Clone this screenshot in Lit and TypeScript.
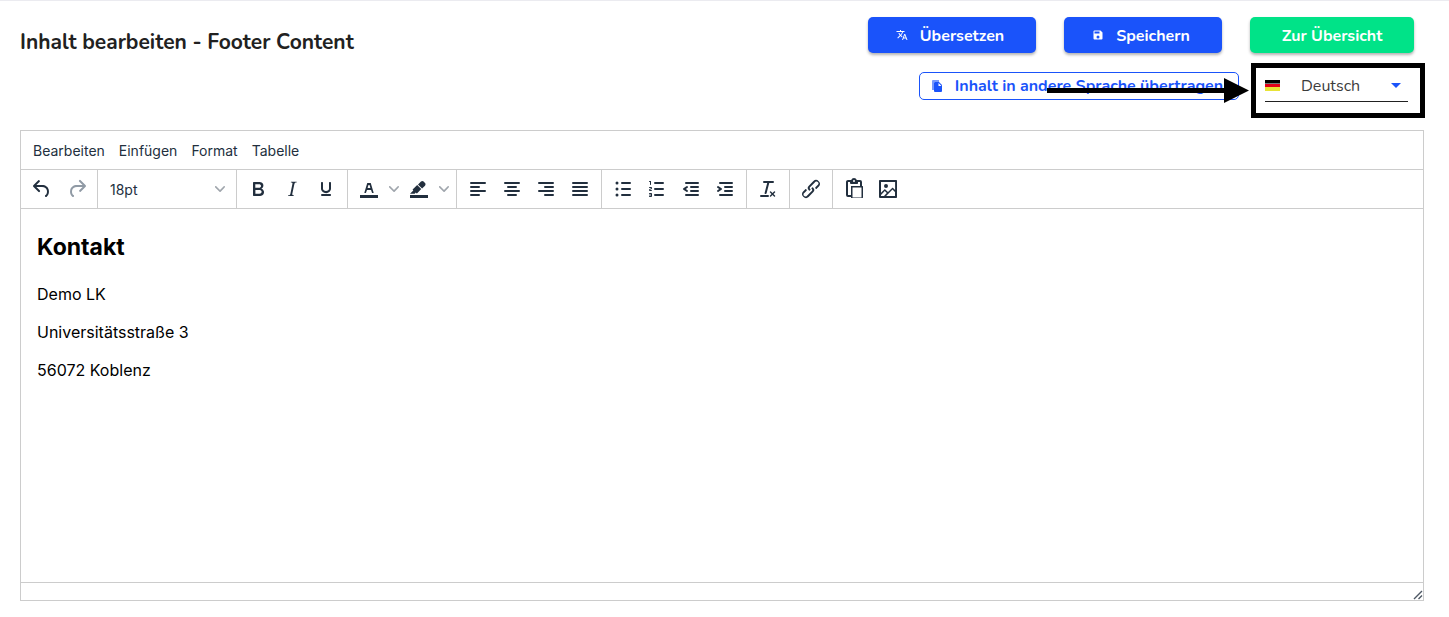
import { LitElement, html, css, svg, type TemplateResult } from "lit";
import { customElement, property, state } from "lit/decorators.js";

const ICONS: Record<string, string[]> = {
  undo: ["M6.4 8H12c3.7 0 6.2 2 6.8 5.1.6 2.7-.4 5.6-2.3 6.8a1 1 0 0 1-1-1.8c1.1-.6 1.8-2.7 1.4-4.6-.5-2.1-2.1-3.5-4.9-3.5H6.4l3.3 3.3a1 1 0 1 1-1.4 1.4l-5-5a1 1 0 0 1 0-1.4l5-5a1 1 0 0 1 1.4 1.4L6.4 8Z"],
  redo: ["M17.6 10H12c-2.8 0-4.4 1.4-4.9 3.5-.4 2 .3 4 1.4 4.6a1 1 0 1 1-1 1.8c-2-1.2-2.9-4.1-2.3-6.8.6-3 3-5.1 6.8-5.1h5.6l-3.3-3.3a1 1 0 1 1 1.4-1.4l5 5a1 1 0 0 1 0 1.4l-5 5a1 1 0 0 1-1.4-1.4l3.3-3.3Z"],
  bold: ["M7.8 19c-.3 0-.5 0-.6-.2l-.2-.5V5.7c0-.2 0-.4.2-.5l.6-.2h5c1.5 0 2.7.3 3.5 1 .7.6 1.1 1.4 1.1 2.5a3 3 0 0 1-.6 1.9c-.4.6-1 1-1.6 1.2.4.1.9.3 1.3.6s.8.7 1 1.2c.4.4.5 1 .5 1.6 0 1.3-.4 2.3-1.3 3-.8.7-2.1 1-3.8 1H7.8Zm5-8.3c.6 0 1.2-.1 1.6-.5.4-.3.6-.7.6-1.3 0-1.1-.8-1.7-2.3-1.7H9.3v3.5h3.4Zm.5 6c.7 0 1.3-.1 1.7-.4.4-.4.6-.9.6-1.5s-.2-1-.7-1.4c-.4-.3-1-.4-2-.4H9.4v3.8h4Z"],
  italic: ["m16.7 4.7-.1.9h-.3c-.6 0-1 0-1.4.3-.3.3-.4.6-.5 1.1l-2.1 9.8v.6c0 .5.4.8 1.4.8h.2l-.2.8H8l.2-.8h.2c1.1 0 1.8-.5 2-1.5l2-9.8.1-.5c0-.6-.4-.8-1.4-.8h-.3l.2-.9h5.8Z"],
  underline: ["M16 5c.6 0 1 .4 1 1v5.5a4 4 0 0 1-.4 1.8l-1 1.4a5.3 5.3 0 0 1-5.5 1 5 5 0 0 1-1.6-1c-.5-.4-.8-.9-1.1-1.4a4 4 0 0 1-.4-1.8V6c0-.6.4-1 1-1s1 .4 1 1v5.5c0 .3 0 .6.2 1l.6.7a3.3 3.3 0 0 0 2.2.8 3.4 3.4 0 0 0 2.2-.8c.3-.2.4-.5.6-.8l.2-.9V6c0-.6.4-1 1-1ZM8 17h8c.6 0 1 .4 1 1s-.4 1-1 1H8a1 1 0 0 1 0-2Z"],
  textColor: ["M3 18h18v3H3z", "M8.7 16h-.8a.5.5 0 0 1-.5-.6l2.7-9c.1-.3.3-.4.5-.4h2.8c.2 0 .4.1.5.4l2.7 9a.5.5 0 0 1-.5.6h-.8a.5.5 0 0 1-.4-.4l-.7-2.2c0-.3-.3-.4-.5-.4h-3.4c-.2 0-.4.1-.5.4l-.7 2.2c0 .3-.2.4-.4.4Zm2.6-7.6-.6 2a.5.5 0 0 0 .5.6h1.6a.5.5 0 0 0 .5-.6l-.6-2c0-.3-.3-.4-.5-.4h-.4c-.2 0-.4.1-.5.4Z"],
  highlight: ["M3 18h18v3H3z", "M7.7 16.7H3l3.3-3.3-.7-.8L10.2 8l4 4.1-4 4.2c-.2.2-.6.2-.8 0l-.6-.7-1.1 1.1Zm5-7.5L11 7.4l3-2.9a2 2 0 0 1 2.6 0L18 6c.7.7.7 2 0 2.7l-2.9 2.9-1.8-1.8-.6-.6Z"],
  alignLeft: ["M5 5h14a1 1 0 0 1 0 2H5a1 1 0 1 1 0-2Zm0 4h8a1 1 0 0 1 0 2H5a1 1 0 1 1 0-2Zm0 8h8a1 1 0 0 1 0 2H5a1 1 0 0 1 0-2Zm0-4h14a1 1 0 0 1 0 2H5a1 1 0 0 1 0-2Z"],
  alignCenter: ["M5 5h14a1 1 0 0 1 0 2H5a1 1 0 1 1 0-2Zm3 4h8a1 1 0 0 1 0 2H8a1 1 0 1 1 0-2Zm0 8h8a1 1 0 0 1 0 2H8a1 1 0 0 1 0-2Zm-3-4h14a1 1 0 0 1 0 2H5a1 1 0 0 1 0-2Z"],
  alignRight: ["M5 5h14a1 1 0 0 1 0 2H5a1 1 0 1 1 0-2Zm6 4h8a1 1 0 0 1 0 2h-8a1 1 0 0 1 0-2Zm0 8h8a1 1 0 0 1 0 2h-8a1 1 0 0 1 0-2Zm-6-4h14a1 1 0 0 1 0 2H5a1 1 0 0 1 0-2Z"],
  alignJustify: ["M5 5h14a1 1 0 0 1 0 2H5a1 1 0 1 1 0-2Zm0 4h14a1 1 0 0 1 0 2H5a1 1 0 1 1 0-2Zm0 4h14a1 1 0 0 1 0 2H5a1 1 0 0 1 0-2Zm0 4h14a1 1 0 0 1 0 2H5a1 1 0 0 1 0-2Z"],
  bulletList: ["M11 5h8a1 1 0 0 1 0 2h-8a1 1 0 0 1 0-2Zm0 6h8a1 1 0 0 1 0 2h-8a1 1 0 0 1 0-2Zm0 6h8a1 1 0 0 1 0 2h-8a1 1 0 0 1 0-2ZM4.5 6a1.5 1.5 0 1 1 3 0 1.5 1.5 0 0 1-3 0Zm0 6a1.5 1.5 0 1 1 3 0 1.5 1.5 0 0 1-3 0Zm0 6a1.5 1.5 0 1 1 3 0 1.5 1.5 0 0 1-3 0Z"],
  numberList: ["M10 17h8a1 1 0 0 1 0 2h-8a1 1 0 0 1 0-2Zm0-6h8a1 1 0 0 1 0 2h-8a1 1 0 0 1 0-2Zm0-6h8a1 1 0 0 1 0 2h-8a1 1 0 1 1 0-2ZM6 4v3.5c0 .3-.2.5-.5.5a.5.5 0 0 1-.5-.5V5h-.5a.5.5 0 0 1 0-1H6Zm-1 8.8.2.2h1.3c.3 0 .5.2.5.5s-.2.5-.5.5H4.9a1 1 0 0 1-.9-1V13c0-.4.3-.8.6-1l1.2-.4.2-.3a.2.2 0 0 0-.2-.2H4.5a.5.5 0 0 1-.5-.5c0-.3.2-.5.5-.5h1.6c.5 0 .9.4.9 1v.1c0 .4-.3.8-.6 1l-1.2.4-.2.3ZM7 17v2c0 .6-.4 1-1 1H4.5a.5.5 0 0 1 0-1h1.2c.2 0 .3-.1.3-.3 0-.2-.1-.3-.3-.3H4.4a.4.4 0 1 1 0-.8h1.3c.2 0 .3-.1.3-.3 0-.2-.1-.3-.3-.3H4.5a.5.5 0 1 1 0-1H6c.6 0 1 .4 1 1Z"],
  outdent: ["M7 5h12a1 1 0 0 1 0 2H7a1 1 0 1 1 0-2Zm5 4h7a1 1 0 0 1 0 2h-7a1 1 0 0 1 0-2Zm0 4h7a1 1 0 0 1 0 2h-7a1 1 0 0 1 0-2Zm-5 4h12a1 1 0 0 1 0 2H7a1 1 0 0 1 0-2Zm1.6-3.8a1 1 0 0 1-1.2 1.6l-3-2a1 1 0 0 1 0-1.6l3-2a1 1 0 0 1 1.2 1.6L6.8 12l1.8 1.2Z"],
  indent: ["M7 5h12a1 1 0 0 1 0 2H7a1 1 0 1 1 0-2Zm5 4h7a1 1 0 0 1 0 2h-7a1 1 0 0 1 0-2Zm0 4h7a1 1 0 0 1 0 2h-7a1 1 0 0 1 0-2Zm-5 4h12a1 1 0 0 1 0 2H7a1 1 0 0 1 0-2Zm-2.6-3.8L6.2 12l-1.8-1.2a1 1 0 0 1 1.2-1.6l3 2a1 1 0 0 1 0 1.6l-3 2a1 1 0 1 1-1.2-1.6Z"],
  removeFormat: ["M13.2 6a1 1 0 0 1 0 .2l-2.6 10a1 1 0 0 1-1 .8h-.2a.8.8 0 0 1-.8-1l2.6-10H8a1 1 0 1 1 0-2h9a1 1 0 0 1 0 2h-3.8ZM5 18h7a1 1 0 0 1 0 2H5a1 1 0 0 1 0-2Zm13 1.5L16.5 18 15 19.5a.7.7 0 0 1-1-1l1.5-1.5-1.5-1.5a.7.7 0 0 1 1-1l1.5 1.5 1.5-1.5a.7.7 0 0 1 1 1L17.5 17l1.5 1.5a.7.7 0 0 1-1 1Z"],
  link: ["M6.2 12.3a1 1 0 0 1 1.4 1.4l-2 2a2 2 0 1 0 2.6 2.8l4.8-4.8a1 1 0 0 0 0-1.4 1 1 0 1 1 1.4-1.3 2.9 2.9 0 0 1 0 4L9.6 20a3.9 3.9 0 0 1-5.5-5.5l2-2Zm11.6-.6a1 1 0 0 1-1.4-1.4l2-2a2 2 0 1 0-2.6-2.8L11 10.3a1 1 0 0 0 0 1.4A1 1 0 1 1 9.6 13a2.9 2.9 0 0 1 0-4L14.4 4a3.9 3.9 0 0 1 5.5 5.5l-2 2Z"],
  paste: ["M18 9V5h-2v1c0 .6-.4 1-1 1H9a1 1 0 0 1-1-1V5H6v13h3V9h9ZM9 20H6a2 2 0 0 1-2-2V5c0-1.1.9-2 2-2h3.2A3 3 0 0 1 12 1a3 3 0 0 1 2.8 2H18a2 2 0 0 1 2 2v4h.5c.3 0 .5.2.5.5v11c0 .3-.2.5-.5.5h-11a.5.5 0 0 1-.5-.5V20Zm1.500-9.500v10h9v-10h-9ZM12 3a1 1 0 1 0 0 2 1 1 0 0 0 0-2Z"],
  image: ["m5 15.7 3.3-3.2c.3-.3.7-.3 1 0L12 15l4.1-4c.3-.4.8-.4 1 0l2 1.9V5H5v10.7ZM5 18V19h3l2.8-2.9-2-2L5 17.9Zm14-3-2.5-2.4-6.4 6.5H19v-4ZM4 3h16c.6 0 1 .4 1 1v16c0 .6-.4 1-1 1H4a1 1 0 0 1-1-1V4c0-.6.4-1 1-1Zm6 8a2 2 0 1 1 0-4 2 2 0 0 1 0 4Z"],
  translate: ["m12.87 15.07-2.54-2.51.03-.03A17.52 17.52 0 0 0 14.07 6H17V4h-7V2H8v2H1v1.99h11.17C11.5 7.92 10.44 9.75 9 11.35 8.07 10.32 7.3 9.19 6.69 8h-2c.73 1.63 1.73 3.17 2.98 4.56l-5.09 5.02L4 19l5-5 3.11 3.11.76-2.04ZM18.5 10h-2L12 22h2l1.12-3h4.75L21 22h2l-4.5-12Zm-2.62 7 1.62-4.33L19.12 17h-3.24Z"],
  save: ["M17 3H5a2 2 0 0 0-2 2v14a2 2 0 0 0 2 2h14a2 2 0 0 0 2-2V7l-4-4Zm-5 16a3 3 0 1 1 0-6 3 3 0 0 1 0 6Zm3-10H5V5h10v4Z"],
};

@customElement("line-icon")
export class LineIcon extends LitElement {
  @property() name = "";
  @property({ type: Number }) size = 24;

  static styles = css`
    :host {
      display: flex;
      flex: none;
    }
    svg {
      display: block;
      fill: currentColor;
    }
  `;

  render() {
    return html`<svg width=${this.size} height=${this.size} viewBox="0 0 24 24" aria-hidden="true">
      ${(ICONS[this.name] ?? []).map((d) => svg`<path fill-rule="evenodd" d=${d}></path>`)}
    </svg>`;
  }
}

type Tool = { icon: string; label: string; menu?: boolean };

const STYLE_TOOLS: Tool[][] = [
  [
    { icon: "bold", label: "Fett" },
    { icon: "italic", label: "Kursiv" },
    { icon: "underline", label: "Unterstrichen" },
  ],
  [
    { icon: "textColor", label: "Textfarbe", menu: true },
    { icon: "highlight", label: "Hintergrundfarbe", menu: true },
  ],
  [
    { icon: "alignLeft", label: "Linksbündig" },
    { icon: "alignCenter", label: "Zentriert" },
    { icon: "alignRight", label: "Rechtsbündig" },
    { icon: "alignJustify", label: "Blocksatz" },
  ],
  [
    { icon: "bulletList", label: "Aufzählung" },
    { icon: "numberList", label: "Nummerierte Liste" },
    { icon: "outdent", label: "Einzug verkleinern" },
    { icon: "indent", label: "Einzug vergrößern" },
  ],
  [{ icon: "removeFormat", label: "Formatierung entfernen" }],
  [{ icon: "link", label: "Link" }],
  [
    { icon: "paste", label: "Einfügen" },
    { icon: "image", label: "Bild" },
  ],
];

const chevron = html`<svg class="chevron" width="10" height="10" viewBox="0 0 10 10" aria-hidden="true">
  <path d="M8.7 2.2c.3-.3.8-.3 1 0 .4.4.4.9 0 1.2L5.7 7.8c-.3.3-.9.3-1.2 0L.2 3.4a.8.8 0 0 1 0-1.2c.3-.3.8-.3 1.1 0L5 6l3.7-3.8Z" />
</svg>`;

@customElement("text-editor")
export class TextEditor extends LitElement {
  static styles = css`
    :host {
      display: flex;
      flex-direction: column;
      box-sizing: border-box;
      border: 1px solid #cccccc;
      background: #fff;
      color: #222f3e;
      font-family: Inter, "Liberation Sans", sans-serif;
      font-size: 14px;
    }
    button,
    select {
      margin: 0;
      padding: 0;
      border: 0;
      background: none;
      color: inherit;
      font: inherit;
      cursor: pointer;
    }
    .menubar {
      display: flex;
      height: 39px;
      align-items: center;
      padding: 0 5px;
      box-sizing: border-box;
      border-bottom: 1px solid #cccccc;
    }
    .menu {
      padding: 0 7px;
      height: 28px;
    }
    .toolbar {
      display: flex;
      height: 38px;
      border-bottom: 1px solid #cccccc;
    }
    .group {
      display: flex;
      align-items: center;
      padding: 0 4px;
      border-right: 1px solid #cccccc;
    }
    .group:last-child {
      border-right: 0;
    }
    .history {
      padding: 0 3px;
    }
    .tool {
      display: flex;
      justify-content: center;
      align-items: center;
      width: 34px;
      height: 28px;
    }
    .history .tool {
      width: 35px;
    }
    .tool:disabled {
      color: #909aa5;
    }
    .more {
      display: flex;
      justify-content: center;
      align-items: center;
      width: 16px;
      height: 28px;
    }
    .chevron {
      display: block;
      fill: #a0a6ad;
    }
    .size {
      display: grid;
      width: 130px;
      align-items: center;
    }
    .size > * {
      grid-area: 1 / 1;
    }
    .size select {
      appearance: none;
      height: 28px;
      padding: 0 8px;
    }
    .size .chevron {
      justify-self: end;
      margin-right: 7px;
      pointer-events: none;
    }
    .content {
      flex: 1;
      padding: 16px;
      color: #000;
      font-size: 16px;
      line-height: 22px;
      outline: none;
    }
    .content h2 {
      margin: 6px 0 20px;
      font-size: 23px;
      line-height: 32px;
      font-weight: 700;
    }
    .content p {
      margin: 0 0 16px;
    }
    .status {
      display: flex;
      justify-content: flex-end;
      align-items: flex-end;
      height: 17px;
      border-top: 1px solid #cccccc;
    }
    .grip {
      display: block;
      fill: none;
      stroke: #4e5864;
    }
  `;

  private tool(t: Tool): TemplateResult {
    return html`<button class="tool" type="button" aria-label=${t.label}><line-icon name=${t.icon}></line-icon></button>
      ${t.menu
        ? html`<button class="more" type="button" aria-label="${t.label} auswählen">${chevron}</button>`
        : null}`;
  }

  render() {
    return html`
      <div class="menubar">
        ${["Bearbeiten", "Einfügen", "Format", "Tabelle"].map(
          (m) => html`<button class="menu" type="button">${m}</button>`
        )}
      </div>
      <div class="toolbar">
        <div class="group history">
          <button class="tool" type="button" aria-label="Rückgängig"><line-icon name="undo"></line-icon></button>
          <button class="tool" type="button" aria-label="Wiederholen" disabled><line-icon name="redo"></line-icon></button>
        </div>
        <div class="group">
          <div class="size">
            <select aria-label="Schriftgröße">
              <option>18pt</option>
            </select>
            ${chevron}
          </div>
        </div>
        ${STYLE_TOOLS.map((g) => html`<div class="group">${g.map((t) => this.tool(t))}</div>`)}
      </div>
      <div class="content" contenteditable="true" role="textbox" aria-label="Inhalt">
        <h2>Kontakt</h2>
        <p>Demo LK</p>
        <p>Universitätsstraße 3</p>
        <p>56072 Koblenz</p>
      </div>
      <div class="status">
        <svg class="grip" width="12" height="12" viewBox="0 0 12 12" aria-hidden="true">
          <path d="M3 11 11 3M7.500 11l3.500-3.500" stroke-width="1.4" />
        </svg>
      </div>
    `;
  }
}

@customElement("app-root")
export class AppRoot extends LitElement {
  @state() private language = "Deutsch";

  static styles = css`
    :host {
      display: flex;
      flex-direction: column;
      box-sizing: border-box;
      min-height: 100vh;
      padding: 16px 25px 16px 20px;
      border-top: 1px solid #ebebf0;
      background: #fff;
      color: #212121;
      font-family: Nunito, Lato, "Open Sans", sans-serif;
      font-size: 16px;
    }
    .header {
      display: flex;
      justify-content: space-between;
      align-items: flex-start;
      margin-bottom: 12px;
    }
    h1 {
      margin: 11px 0 0;
      font-size: 21px;
      line-height: 28px;
      font-weight: 700;
    }
    .controls {
      display: flex;
      flex-direction: column;
      align-items: flex-end;
      gap: 10px;
    }
    .actions {
      display: flex;
      gap: 28px;
      margin-right: 10px;
    }
    button {
      display: flex;
      align-items: center;
      justify-content: center;
      box-sizing: border-box;
      font: inherit;
      font-weight: 700;
      cursor: pointer;
    }
    .action {
      gap: 12px;
      min-width: 158px;
      height: 36px;
      padding: 0 28px 0 24px;
      border: 0;
      border-radius: 5px;
      background: #1a53fa;
      color: #fff;
      box-shadow: 0 2px 3px rgba(0, 0, 0, 0.3);
    }
    .action span {
      padding-top: 2px;
    }
    .wide {
      min-width: 168px;
    }
    .overview {
      min-width: 164px;
      padding: 0 24px;
      background: #00e388;
    }
    .transfer-row {
      display: flex;
      align-items: flex-start;
      gap: 12px;
      margin-right: -1px;
    }
    .transfer {
      gap: 12px;
      min-width: 320px;
      height: 28px;
      margin-top: 9px;
      padding: 0 12px 0 8px;
      border: 1px solid #1a53fa;
      border-radius: 5px;
      background: #fff;
      color: #1a53fa;
    }
    .callout {
      position: relative;
      box-sizing: border-box;
      width: 174px;
      height: 55px;
      padding: 0 12px 0 9px;
      border: 5px solid #000;
    }
    .arrow {
      position: absolute;
      right: calc(100% + 7px);
      top: 10px;
      display: block;
    }
    .language {
      display: grid;
      grid-template-columns: 15px 1fr;
      align-items: center;
      height: 33px;
      border-bottom: 1px solid #212121;
    }
    .language > * {
      grid-row: 1;
    }
    .language svg {
      display: block;
      pointer-events: none;
    }
    .flag {
      grid-column: 1;
    }
    select {
      grid-column: 1 / 3;
      width: 100%;
      height: 32px;
      margin: 2px 0 0;
      padding: 0 24px 0 36px;
      appearance: none;
      border: 0;
      background: none;
      color: #3c3c3c;
      font: inherit;
    }
    .caret {
      grid-column: 2;
      justify-self: end;
      margin-right: 7px;
    }
    text-editor {
      flex: 1;
    }
  `;

  render() {
    return html`
      <div class="header">
        <h1>Inhalt bearbeiten - Footer Content</h1>
        <div class="controls">
          <div class="actions">
            <button class="action wide" type="button">
              <line-icon name="translate" size="12"></line-icon><span>Übersetzen</span>
            </button>
            <button class="action" type="button">
              <line-icon name="save" size="12"></line-icon><span>Speichern</span>
            </button>
            <button class="action overview" type="button"><span>Zur Übersicht</span></button>
          </div>
          <div class="transfer-row">
            <button class="transfer" type="button">
              <svg width="12" height="12" viewBox="0 0 12 12" aria-hidden="true">
                <path d="M1 10V1a1 1 0 0 1 1-1h6v2H3v8Z" fill="#1a53fa" opacity=".6" />
                <path d="M4 2h4l3 3v6a1 1 0 0 1-1 1H4a1 1 0 0 1-1-1V3a1 1 0 0 1 1-1Z" fill="#1a53fa" />
                <path d="M7.500 3v3h3Z" fill="#fff" />
              </svg>
              Inhalt in andere Sprache übertragen
            </button>
            <div class="callout">
              <label class="language">
                <svg class="flag" width="15" height="11" viewBox="0 0 15 11" role="img" aria-label="Sprache">
                  <path d="M0 0h15v4H0Z" fill="#000" />
                  <path d="M0 3h15v1H0Z" fill="#777" />
                  <path d="M0 4h15v3H0Z" fill="#e2001a" />
                  <path d="M0 7h15v4H0Z" fill="#e8e337" />
                </svg>
                <select @change=${(e: Event) => (this.language = (e.target as HTMLSelectElement).value)}>
                  <option ?selected=${this.language === "Deutsch"}>Deutsch</option>
                </select>
                <svg class="caret" width="10" height="5" viewBox="0 0 10 5" aria-hidden="true">
                  <path d="m0 0 5 5 5-5Z" fill="#1a53fa" />
                </svg>
              </label>
              <svg class="arrow" width="202" height="25" viewBox="0 0 202 25" aria-hidden="true">
                <path d="M0 10h177V0l25 12.500L177 25V15H0Z" />
              </svg>
            </div>
          </div>
        </div>
      </div>
      <text-editor></text-editor>
    `;
  }
}
